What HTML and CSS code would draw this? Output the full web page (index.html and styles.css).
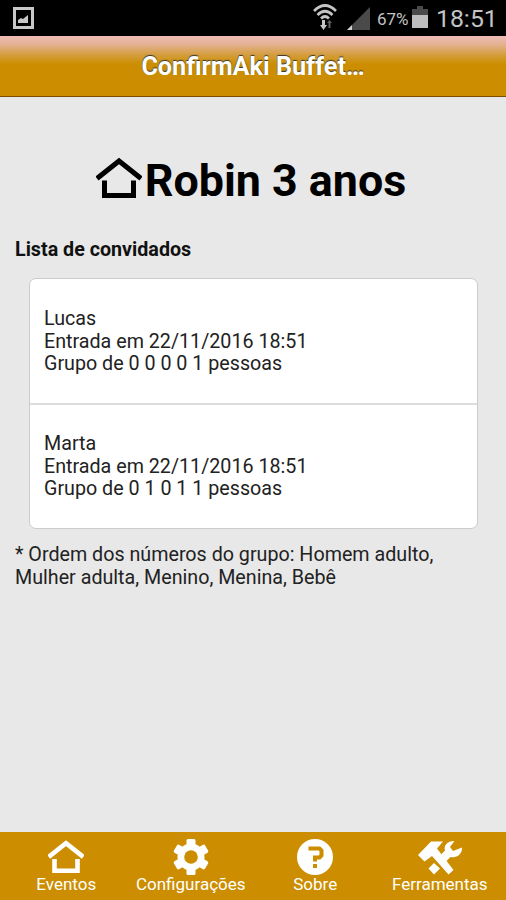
FILE: index.html
```html
<!DOCTYPE html>
<html lang="pt-BR">
<head>
    <meta charset="UTF-8">
    <meta name="viewport" content="width=device-width, initial-scale=1.0">
    <title>ConfirmAki Buffet</title>
    <link rel="stylesheet" href="styles.css">
</head>
<body>
    <div class="status-bar">
        <svg class="status-picture" width="21" height="22" viewBox="0 0 21 22">
            <rect x="1.5" y="1.5" width="18" height="19" fill="none" stroke="#c8c8c8" stroke-width="3"/>
            <path d="M5 16v-3l3-2 2 1 5-4v8z" fill="#c8c8c8"/>
        </svg>
        <svg class="status-wifi" width="24" height="26" viewBox="0 0 24 26">
            <g fill="none" stroke="#c4c4c4" stroke-width="2.6">
                <path d="M1 7Q12-4 23 7"/>
                <path d="M4.500 11Q12 3.500 19.500 11"/>
                <path d="M8 14.500Q12 10.500 16 14.500"/>
            </g>
            <path d="M9 16h3v5h2l-3.500 5L7 21h2z" fill="#c4c4c4"/>
            <path d="M15.500 24v-5H14l2.500-3 2.500 3h-1.500v5z" fill="#606060"/>
        </svg>
        <svg class="status-signal" width="23" height="23" viewBox="0 0 23 23">
            <path d="M23 0v23H0z" fill="#4a4a4a"/>
            <path d="M5 18v5H0z" fill="#d0d0d0"/>
        </svg>
        <span class="status-percent">67%</span>
        <svg class="status-battery" width="16" height="22" viewBox="0 0 16 22">
            <path d="M5 0h6v3h5v6H0V3h5z" fill="#4a4a4a"/>
            <path d="M0 9h16v13H0z" fill="#bdbdbd"/>
        </svg>
        <span class="status-clock">18:51</span>
    </div>

    <header class="header">
        <h1 class="header-title">ConfirmAki Buffet…</h1>
    </header>

    <main class="content">
        <h2 class="event-title">
            <svg class="event-icon" width="46" height="42" viewBox="0 0 46 42">
                <path d="M1 21.500L23 4l22 17.500M8.500 23.500v15h29v-15" fill="none" stroke="#000" stroke-width="5"/>
            </svg>
            <span>Robin 3 anos</span>
        </h2>
        <h3 class="list-title">Lista de convidados</h3>
        <ul class="guest-list">
            <li class="guest">
                Lucas<br>
                Entrada em 22/11/2016 18:51<br>
                Grupo de 0 0 0 0 1 pessoas
            </li>
            <li class="guest">
                Marta<br>
                Entrada em 22/11/2016 18:51<br>
                Grupo de 0 1 0 1 1 pessoas
            </li>
        </ul>
        <p class="note">* Ordem dos números do grupo: Homem adulto,<br>Mulher adulta, Menino, Menina, Bebê</p>
    </main>

    <nav class="tab-bar">
        <a class="tab">
            <svg width="36" height="36" viewBox="0 0 36 36">
                <path d="M.7 18L18 4.200 35.300 18M6.500 20v11.800h23V20" fill="none" stroke="#fff" stroke-width="4.600"/>
            </svg>
            <span>Eventos</span>
        </a>
        <a class="tab">
            <svg width="36" height="36" viewBox="0 0 36 36">
                <g fill="#fff">
                    <rect x="13.500" width="9" height="36" rx="1.500"/>
                    <rect x="13.500" width="9" height="36" rx="1.500" transform="rotate(60 18 18)"/>
                    <rect x="13.500" width="9" height="36" rx="1.500" transform="rotate(120 18 18)"/>
                    <circle cx="18" cy="18" r="13.500"/>
                </g>
                <circle cx="18" cy="18" r="6.800" fill="#cc8e00"/>
            </svg>
            <span>Configurações</span>
        </a>
        <a class="tab">
            <svg width="36" height="36" viewBox="0 0 36 36">
                <circle cx="18" cy="18" r="18" fill="#fff"/>
                <path d="M11.500 9.500h11L24.500 11.500v5l-2 2H18v4" fill="none" stroke="#cc8e00" stroke-width="4"/>
                <path d="M16 25h4v4h-4z" fill="#cc8e00"/>
            </svg>
            <span>Sobre</span>
        </a>
        <a class="tab">
            <svg width="46" height="36" viewBox="0 0 46 36">
                <g fill="#fff">
                    <path d="M1 16L14 2.500h12L20 9.500 36.500 31 31.500 35.500 15 17l-7.500 5.500z"/>
                    <path d="M11.500 29.500l5.500-5.500 6 5.500-6 6z"/>
                    <path d="M22 17.500l6-6C26.500 7 30 2 37.500 2l-4.500 6 3 4L45 8.500C45.500 15 39.500 19.500 33.500 18l-5.500 5.500z"/>
                </g>
            </svg>
            <span>Ferramentas</span>
        </a>
    </nav>
</body>
</html>
```

FILE: styles.css
```css
*, *::before, *::after {
    box-sizing: border-box;
}

body {
    margin: 0;
    height: 900px;
    display: flex;
    flex-direction: column;
    background-color: #e8e8e8;
    color: #222;
    font-family: Roboto, sans-serif;
    font-size: 19.7px;
}

h1, h2, h3, p, ul {
    margin: 0;
    padding: 0;
}

svg {
    display: block;
    flex: none;
}

/* Barra de status */
.status-bar {
    height: 36px;
    display: flex;
    align-items: flex-start;
    background-color: #000;
    padding: 0 10px 0 13px;
    color: #c4c4c4;
    white-space: nowrap;
}
.status-picture {
    margin-top: 7px;
}
.status-wifi {
    margin: 4px 10px 0 auto;
}
.status-signal {
    margin: 7px 7px 0 0;
}
.status-percent {
    width: 32px;
    margin-top: 9px;
    font-size: 17px;
    line-height: 20px;
}
.status-battery {
    margin: 6px 8px 0 3px;
}
.status-clock {
    width: 60px;
    font-size: 24.8px;
    line-height: 38px;
}

/* Cabeçalho */
.header {
    height: 61px;
    display: flex;
    justify-content: center;
    border-bottom: 1px solid #7a4d00;
    background: linear-gradient(#eebbb8 0, #e4b294 8px, #d49d3c 19px, #cc8e00 28px);
}
.header-title {
    color: #fff;
    font-size: 25.2px;
    font-weight: bold;
    line-height: 61px;
    text-shadow: 0 -1px 1px #333;
}

.content {
    flex: 1;
    padding: 0 15px;
}
.event-title {
    display: flex;
    justify-content: center;
    margin-top: 56px;
    height: 56px;
    padding-right: 4px;
    font-size: 44.8px;
    line-height: 56px;
    color: #000;
}
.event-icon {
    margin-top: 4px;
    margin-right: 3px;
}
.list-title {
    margin-top: 29px;
    color: #111;
    font-size: 19.7px;
    line-height: 23px;
}

/* Lista de convidados */
.guest-list {
    list-style: none;
    margin: 17px 13px 0 14px;
    border: 1px solid #ccc;
    border-radius: 7px;
    background-color: #fff;
}
.guest {
    height: 124px;
    padding: 29px 14px;
    line-height: 22.5px;
}
.guest + .guest {
    height: 125px;
    padding-top: 28px;
    border-top: 2px solid #ddd;
}
.note {
    margin-top: 15px;
    line-height: 22.5px;
    white-space: nowrap;
}

/* Barra inferior */
.tab-bar {
    height: 68px;
    display: flex;
    padding: 7px 4px 0;
    background-color: #cc8e00;
    color: #fff;
}
.tab {
    flex: 1;
    display: flex;
    flex-direction: column;
    align-items: center;
    font-size: 17px;
    line-height: 18px;
}
```
